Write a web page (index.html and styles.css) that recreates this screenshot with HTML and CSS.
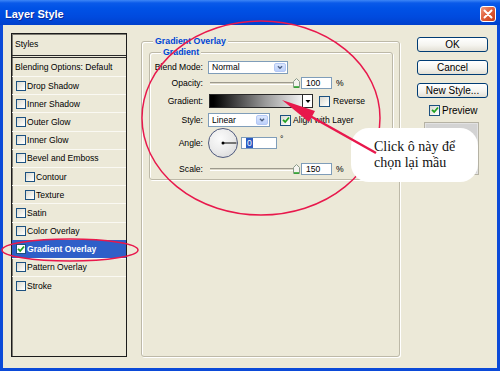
FILE: index.html
```html
<!DOCTYPE html>
<html>
<head>
<meta charset="utf-8">
<link rel="stylesheet" href="styles.css">
</head>
<body>
<div class="window">
  <div class="titlebar">
    <span class="title">Layer Style</span>
    <span class="close"><svg width="14" height="14" viewBox="0 0 14 14"><path d="M3.5 3.5 L10.5 10.5 M10.5 3.5 L3.5 10.5" stroke="#fff" stroke-width="2" stroke-linecap="round"/></svg></span>
  </div>
  <div class="frame">
    <div class="stylelist">
      <div class="item head">Styles</div>
      <div class="item blend">Blending Options: Default</div>
      <div class="item"><span class="cb"></span>Drop Shadow</div>
      <div class="item"><span class="cb"></span>Inner Shadow</div>
      <div class="item"><span class="cb"></span>Outer Glow</div>
      <div class="item"><span class="cb"></span>Inner Glow</div>
      <div class="item"><span class="cb"></span>Bevel and Emboss</div>
      <div class="item sub"><span class="cb"></span>Contour</div>
      <div class="item sub"><span class="cb"></span>Texture</div>
      <div class="item"><span class="cb"></span>Satin</div>
      <div class="item"><span class="cb"></span>Color Overlay</div>
      <div class="item sel"><span class="cb"><svg width="8" height="8" viewBox="0 0 8 8"><path d="M1 3.8 L3.2 6 L7 1.5" fill="none" stroke="#21a121" stroke-width="1.8"/></svg></span>Gradient Overlay</div>
      <div class="item"><span class="cb"></span>Pattern Overlay</div>
      <div class="item"><span class="cb"></span>Stroke</div>
    </div>

    <div class="group outer">
      <div class="gtitle">Gradient Overlay</div>
      <div class="group inner">
        <div class="gtitle">Gradient</div>
        <div class="row r1">
          <span class="lbl">Blend Mode:</span>
          <div class="select w80"><span class="val">Normal</span><span class="ddbtn"><svg width="12" height="9" viewBox="0 0 12 9"><path d="M3.5 3 L6 5.5 L8.5 3" fill="none" stroke="#4d6185" stroke-width="1.6"/></svg></span></div>
        </div>
        <div class="row r2">
          <span class="lbl">Opacity:</span>
          <div class="slider"><span class="thumb"><svg width="7" height="10" viewBox="0 0 7 10"><path d="M0.5 3.5 L3.5 0.5 L6.5 3.5 L6.5 9.5 L0.5 9.5 Z" fill="#f4f3ee" stroke="#8a9a8a"/><path d="M1 9 L6 9" stroke="#21a121" stroke-width="1.5"/></svg></span></div>
          <div class="field">100</div>
          <span class="unit">%</span>
        </div>
        <div class="row r3">
          <span class="lbl">Gradient:</span>
          <div class="gradbar"></div>
          <div class="gdd"><svg width="8" height="12" viewBox="0 0 8 12"><path d="M1.5 5 L6.5 5 L4 8 Z" fill="#000"/></svg></div>
          <span class="cb rev"></span>
          <span class="cbtext">Reverse</span>
        </div>
        <div class="row r4">
          <span class="lbl">Style:</span>
          <div class="select w62"><span class="val">Linear</span><span class="ddbtn"><svg width="12" height="10" viewBox="0 0 12 10"><path d="M3.5 3.5 L6 6 L8.5 3.5" fill="none" stroke="#4d6185" stroke-width="1.6"/></svg></span></div>
          <span class="cb align"><svg width="8" height="8" viewBox="0 0 8 8"><path d="M1 3.8 L3.2 6 L7 1.5" fill="none" stroke="#21a121" stroke-width="1.8"/></svg></span>
          <span class="cbtext">Align with Layer</span>
        </div>
        <div class="row r5">
          <span class="lbl">Angle:</span>
          <div class="dial"><svg width="30" height="30" viewBox="0 0 30 30"><line x1="15" y1="15" x2="28.5" y2="15" stroke="#000" stroke-width="1"/><circle cx="15" cy="15" r="1.5" fill="#000"/></svg></div>
          <div class="field angle"><span class="selnum">0</span></div>
          <span class="deg">°</span>
        </div>
        <div class="row r6">
          <span class="lbl">Scale:</span>
          <div class="slider"><span class="thumb"><svg width="7" height="10" viewBox="0 0 7 10"><path d="M0.5 3.5 L3.5 0.5 L6.5 3.5 L6.5 9.5 L0.5 9.5 Z" fill="#f4f3ee" stroke="#8a9a8a"/><path d="M1 9 L6 9" stroke="#21a121" stroke-width="1.5"/></svg></span></div>
          <div class="field">150</div>
          <span class="unit">%</span>
        </div>
      </div>
    </div>

    <div class="side">
      <div class="btn">OK</div>
      <div class="btn">Cancel</div>
      <div class="btn last">New Style...</div>
      <div class="preview"><span class="cb"><svg width="8" height="8" viewBox="0 0 8 8"><path d="M1 3.8 L3.2 6 L7 1.5" fill="none" stroke="#21a121" stroke-width="1.8"/></svg></span><span class="ptext">Preview</span></div>
      <div class="swatch"></div>
    </div>
  </div>

  <svg class="marks" width="500" height="371" viewBox="0 0 500 371">
    <ellipse cx="261" cy="118" rx="119" ry="97" fill="none" stroke="#e8184c" stroke-width="1.5"/>
    <ellipse cx="70" cy="250" rx="68" ry="11" fill="none" stroke="#e8184c" stroke-width="1.5"/>
  </svg>
  <div class="callout">Click ô này để<br>chọn lại mầu</div>
  <svg class="arrow" width="500" height="371" viewBox="0 0 500 371">
    <line x1="311" y1="116.5" x2="376" y2="153" stroke="#e8184c" stroke-width="2.5"/>
    <polygon points="282,100 315,111 309,122" fill="#e8184c"/>
  </svg>
</div>
</body>
</html>
```

FILE: styles.css
```css
* { box-sizing: border-box; }
html, body { margin: 0; padding: 0; }
body {
  font-family: "Liberation Sans", Arial, sans-serif;
  font-size: 8.6px;
  color: #000;
  background: #ece9d8;
}
.window {
  position: relative;
  width: 500px;
  height: 371px;
  overflow: hidden;
}
.titlebar {
  height: 25px;
  display: flex;
  align-items: center;
  justify-content: space-between;
  padding: 3px 4px 0 5px;
  background: linear-gradient(to bottom, #3d86f6 0, #0a5ae9 3px, #0052e6 8px, #004ade 17px, #0040cc 100%);
}
.title {
  color: #fff;
  font-weight: bold;
  font-size: 11px;
  text-shadow: 1px 1px 0 #0a2a9a;
}
.close {
  width: 16px;
  height: 16px;
  border: 1px solid #fff;
  border-radius: 3px;
  background: linear-gradient(135deg, #f09a80 0%, #e0603c 45%, #c83c18 100%);
  display: flex;
  align-items: center;
  justify-content: center;
}
.frame {
  height: 346px;
  border: 3px solid #0b4ad8;
  border-top: none;
  display: flex;
  align-items: flex-start;
  padding: 8px 0 0 8px;
  background: #ece9d8;
}

/* left style list */
.stylelist {
  width: 116px;
  height: 324px;
  flex-shrink: 0;
  border: 1px solid #1c1c1c;
  box-shadow: inset 1px 1px 0 #7d7b72;
}
.item {
  display: flex;
  align-items: center;
  height: 18.2px;
  padding-left: 4px;
  border-top: 1px solid #faf9f3;
  white-space: nowrap;
}
.item.head {
  height: 24px;
  border-top: none;
  border-bottom: 3px double #2a2a2a;
  padding-left: 3px;
  padding-bottom: 1px;
}
.item.blend {
  height: 18px;
  border-top: none;
  padding-left: 3px;
}
.item.sub { padding-left: 13px; }
.item.sel {
  background: #2f5fc8;
  color: #fff;
  font-weight: bold;
  border-top-color: #2f5fc8;
}
.cb {
  width: 10px;
  height: 10px;
  flex-shrink: 0;
  margin-right: 1px;
  border: 1px solid #1c5180;
  background: linear-gradient(135deg, #d9d8d0 0%, #f6f6f2 70%, #fff 100%);
  display: flex;
  align-items: center;
  justify-content: center;
}
.item.sel .cb { background: #fff; }

/* group boxes */
.group {
  border: 1px solid #bdb9a8;
  border-radius: 3px;
  box-shadow: 1px 1px 0 #fff, inset 1px 1px 0 #fff;
}
.outer {
  width: 259px;
  height: 316px;
  margin: 8px 0 0 14px;
  flex-shrink: 0;
}
.gtitle {
  width: max-content;
  margin: -6px 0 0 11px;
  padding: 0 2px;
  background: #ece9d8;
  color: #0046d5;
  font-weight: bold;
  font-size: 8.8px;
  line-height: 10px;
}
.inner {
  height: 128px;
  margin: 6px 6px 0 7px;
}
.row {
  display: flex;
  align-items: center;
  white-space: nowrap;
}
.lbl {
  width: 53px;
  flex-shrink: 0;
  text-align: right;
  margin-right: 5px;
}
.r1 { height: 14px; margin-top: 3px; }
.r2 { height: 14px; margin-top: 2px; }
.r3 { height: 16px; margin-top: 3px; }
.r4 { height: 14px; margin-top: 4px; }
.r5 { height: 30px; margin-top: 1px; }
.r6 { height: 14px; margin-top: 4px; }

.select {
  display: flex;
  height: 13px;
  border: 1px solid #7f9db9;
  background: #fff;
  padding: 1px;
}
.select.w80 { width: 80px; }
.select.w62 { width: 62px; height: 14px; }
.select .val {
  flex: 1;
  padding-left: 2px;
  line-height: 9px;
}
.select.w62 .val { line-height: 10px; }
.ddbtn {
  width: 12px;
  border: 1px solid #b4c8f5;
  border-radius: 2px;
  background: linear-gradient(to bottom, #dce7fd, #bcd0fa);
  display: flex;
  align-items: center;
  justify-content: center;
  overflow: hidden;
}

.slider {
  position: relative;
  width: 86px;
  height: 3px;
  margin-left: 2px;
  border-top: 1px solid #9d9a8d;
  border-bottom: 1px solid #fff;
  background: #dcd8c8;
}
.thumb {
  position: absolute;
  right: -4px;
  top: -5px;
  width: 7px;
  height: 10px;
  display: block;
}
.thumb svg { display: block; }
.field {
  width: 31px;
  height: 12px;
  margin-left: 5px;
  border: 1px solid #7f9db9;
  background: #fff;
  padding-left: 4px;
  line-height: 10px;
}
.unit { margin-left: 4px; }

.gradbar {
  width: 94px;
  height: 14px;
  margin-left: 1px;
  border: 1px solid #2a2a2a;
  background: linear-gradient(to right, #000 4%, #3a3a3a 25%, #9a9a9a 60%, #f2f2f2 100%);
}
.gdd {
  width: 10px;
  height: 14px;
  border: 1px solid #2a2a2a;
  border-left: none;
  background: #fff;
  display: flex;
  align-items: center;
  justify-content: center;
}
.cb.rev { width: 11px; height: 11px; margin-left: 6px; margin-right: 0; }
.cb.align { width: 11px; height: 11px; margin-left: 10px; margin-right: 0; }
.cbtext { margin-left: 3px; }
.r4 .cbtext { margin-left: 2px; }

.dial {
  width: 30px;
  height: 30px;
  border: 1px solid #4f5a7e;
  border-radius: 50%;
  background: radial-gradient(circle at 40% 35%, #fbfbfb 0%, #ebebeb 50%, #d2d2d2 100%);
  overflow: hidden;
}
.dial svg { display: block; margin: -1px 0 0 -1px; }
.field.angle {
  width: 36px;
  margin-left: 3px;
  padding-left: 4px;
}
.selnum {
  background: #2b5bc2;
  color: #fff;
  padding: 0 1px;
}
.deg {
  align-self: flex-start;
  margin-top: 6px;
  margin-left: 3px;
}

/* right column */
.side {
  width: 71px;
  margin: 4px 0 0 17px;
  display: flex;
  flex-direction: column;
  flex-shrink: 0;
  font-size: 10px;
}
.btn {
  height: 15px;
  margin-bottom: 8px;
  border: 1px solid #003c74;
  border-radius: 3px;
  background: linear-gradient(to bottom, #ffffff 0%, #f5f4ef 55%, #e3e0d5 100%);
  text-align: center;
  line-height: 13px;
  white-space: nowrap;
}
.btn.last { margin-bottom: 6px; }
.preview {
  display: flex;
  align-items: center;
  height: 12px;
  padding-left: 12px;
}
.preview .cb { width: 11px; height: 11px; }
.ptext { margin-left: 1px; }
.swatch {
  width: 55px;
  height: 53px;
  margin: 6px 0 0 7px;
  border: 1px solid #b5b2a4;
  background: #d3d3d3;
  box-shadow: inset 0 0 0 1px #e2e2e2;
}

/* annotations */
.marks, .arrow {
  position: absolute;
  left: 0;
  top: 0;
  pointer-events: none;
}
.callout {
  position: absolute;
  left: 351px;
  top: 128px;
  width: 127px;
  height: 54px;
  border-radius: 18px;
  background: #fff;
  padding: 11px 0 0 23px;
  font-family: "Liberation Serif", "Times New Roman", serif;
  font-size: 14px;
  line-height: 16px;
  color: #111;
  white-space: nowrap;
}
```
